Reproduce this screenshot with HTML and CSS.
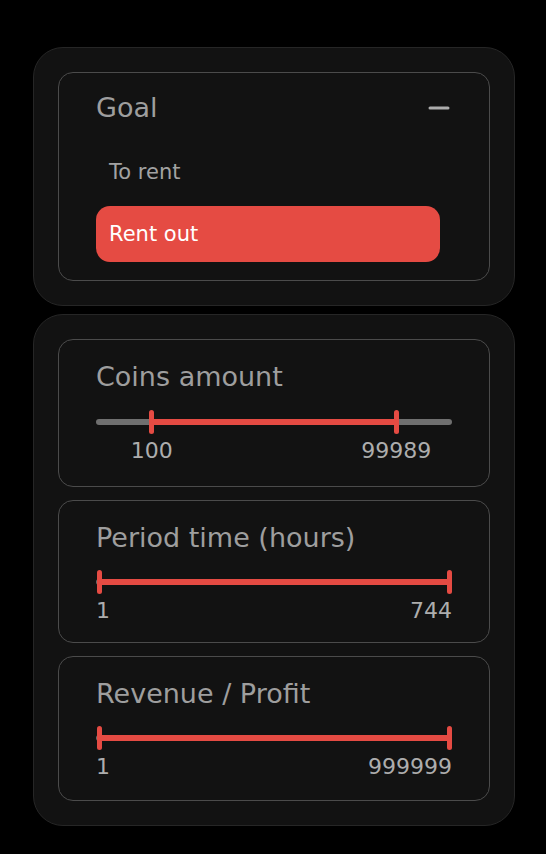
FILE: index.html
```html
<!DOCTYPE html>
<html lang="en">
<head>
    <meta charset="UTF-8">
    <meta name="viewport" content="width=device-width, initial-scale=1.0">
    <title>Filters</title>
    <link rel="stylesheet" href="styles.css">
</head>
<body>
    <div class="page">
        <section class="panel">
            <div class="box goal">
                <div class="goal-head">
                    <h2 class="box-title">Goal</h2>
                    <svg class="collapse-icon" width="24" height="24" viewBox="0 0 24 24">
                        <line x1="3" y1="12" x2="21" y2="12" stroke="#acacac" stroke-width="3" stroke-linecap="round"/>
                    </svg>
                </div>
                <ul class="options">
                    <li class="option">To rent</li>
                    <li class="option active">Rent out</li>
                </ul>
            </div>
        </section>

        <section class="panel">
            <div class="box range range-coins">
                <h2 class="box-title">Coins amount</h2>
                <div class="slider">
                    <div class="rail">
                        <div class="fill" style="left: 15.1%; width: 69.8%;"></div>
                        <span class="thumb" style="left: 15.1%;"></span>
                        <span class="thumb" style="left: 84.9%;"></span>
                    </div>
                </div>
                <div class="marks marks-float">
                    <span style="left: 15.1%;">100</span>
                    <span style="left: 84.9%;">99989</span>
                </div>
            </div>

            <div class="box range range-period">
                <h2 class="box-title">Period time (hours)</h2>
                <div class="slider">
                    <div class="rail">
                        <div class="fill" style="left: 0%; width: 100%;"></div>
                        <span class="thumb" style="left: 0%;"></span>
                        <span class="thumb" style="left: 100%;"></span>
                    </div>
                </div>
                <div class="marks">
                    <span>1</span>
                    <span>744</span>
                </div>
            </div>

            <div class="box range">
                <h2 class="box-title">Revenue / Profit</h2>
                <div class="slider">
                    <div class="rail">
                        <div class="fill" style="left: 0%; width: 100%;"></div>
                        <span class="thumb" style="left: 0%;"></span>
                        <span class="thumb" style="left: 100%;"></span>
                    </div>
                </div>
                <div class="marks">
                    <span>1</span>
                    <span>999999</span>
                </div>
            </div>
        </section>
    </div>
</body>
</html>
```

FILE: styles.css
```css
body {
    margin: 0;
    background-color: #000;
    font-family: "DejaVu Sans", "Liberation Sans", sans-serif;
    color: #a0a0a0;
}

.page {
    padding: 47px 31px 20px 33px;
    display: flex;
    flex-direction: column;
    gap: 8px;
}

/* outer dark cards */
.panel {
    background-color: #121212;
    border: 1px solid #262626;
    border-radius: 30px;
    padding: 24px;
    display: flex;
    flex-direction: column;
    gap: 13px;
}

.box {
    border: 1px solid #4b4b4b;
    border-radius: 15px;
    padding: 21px 37px 20px 37px;
}

.box-title {
    margin: 0;
    font-size: 27px;
    font-weight: normal;
    line-height: 32px;
    color: #9e9e9e;
}

/* goal selector */
.goal {
    padding: 19px 38px 18px 37px;
}

.goal-head {
    display: flex;
    justify-content: space-between;
    align-items: center;
}

.options {
    list-style: none;
    margin: 20px 11px 0 0;
    padding: 0;
    display: flex;
    flex-direction: column;
    gap: 6px;
}

.option {
    height: 56px;
    line-height: 56px;
    padding-left: 13px;
    font-size: 21px;
    color: #a2a2a2;
    border-radius: 14px;
}

.option.active {
    background-color: #e54b43;
    color: #fff;
}

/* range sliders */
.range-coins {
    padding-bottom: 21px;
}

.range-period {
    padding-bottom: 18px;
}

.slider {
    position: relative;
    height: 24px;
    margin-top: 16px;
}

.range-coins .slider {
    margin-top: 17px;
}

.slider::before {
    content: "";
    position: absolute;
    left: 0;
    right: 0;
    top: 9px;
    height: 6px;
    border-radius: 3px;
    background-color: #6f6f6f;
}

.rail {
    position: absolute;
    left: 3px;
    right: 3px;
    top: 0;
    bottom: 0;
}

.fill {
    position: absolute;
    top: 9px;
    height: 6px;
    background-color: #e54b43;
}

.thumb {
    position: absolute;
    top: 0;
    width: 5px;
    height: 24px;
    margin-left: -2.5px;
    border-radius: 3px;
    background-color: #e54b43;
}

.marks {
    display: flex;
    justify-content: space-between;
    margin-top: 4px;
    font-size: 22px;
    line-height: 26px;
    color: #adadad;
}

.marks-float {
    position: relative;
    height: 27px;
    margin: 4px 3px 0;
}

.marks-float span {
    position: absolute;
    top: 0;
    transform: translateX(-50%);
}
```
